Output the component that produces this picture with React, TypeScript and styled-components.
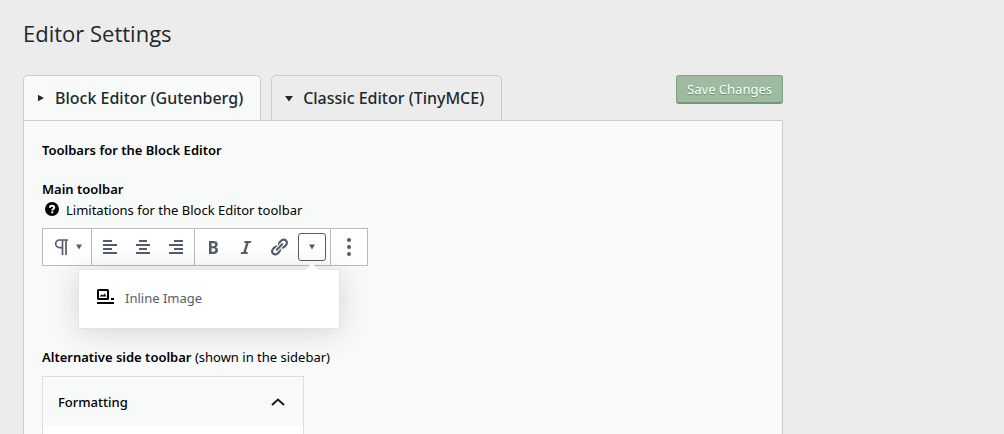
import React from "react";
import styled, { createGlobalStyle, css } from "styled-components";

const GlobalStyle = createGlobalStyle`
  *, *::before, *::after { box-sizing: border-box; }
  body {
    margin: 0;
    background: #ececec;
    color: #000;
    font-family: "Noto Sans", "Open Sans", sans-serif;
    font-size: 13px;
    line-height: 20px;
  }
  button { font: inherit; color: inherit; cursor: pointer; margin: 0; }
`;

const Page = styled.main`
  display: flex;
  flex-direction: column;
  min-height: 100vh;
  max-width: 784px;
  padding: 18px 1px 0 23px;
`;

const Title = styled.h1`
  margin: 0 0 27px;
  font-family: "Open Sans", "Noto Sans", sans-serif;
  font-size: 22px;
  font-weight: 400;
  line-height: 30px;
  color: #23282d;
`;

const Header = styled.div`
  display: flex;
  justify-content: space-between;
  align-items: flex-start;
`;

const Tabs = styled.div`
  display: flex;
  gap: 10px;
  margin-bottom: -1px;
`;

const Tab = styled.button<{ $active?: boolean }>`
  display: flex;
  align-items: center;
  gap: 10px;
  height: 46px;
  padding: 0 17px 0 13px;
  border: 1px solid #ccc;
  border-bottom-color: ${(p) => (p.$active ? "#f8faf9" : "#ccc")};
  border-radius: 5px 5px 0 0;
  background: ${(p) => (p.$active ? "#f8faf9" : "#ececec")};
  color: #23282d;
  font-size: 16px;
  font-weight: 500;
`;

const SaveButton = styled.button`
  height: 29px;
  padding: 0 10px;
  border: 1px solid #7ba581;
  border-bottom: 2px solid #6f9b75;
  border-radius: 3px;
  background: #9ebaa1;
  color: #fff;
  text-shadow: 0 1px 1px #5f9067;
`;

const Panel = styled.section`
  display: flex;
  flex-direction: column;
  flex: 1;
  padding: 19px 18px 0;
  border: 1px solid #ccc;
  border-bottom: 0;
  background: #f8faf9;
`;

const Heading = styled.h2`
  margin: 0;
  font-size: 13px;
  font-weight: 600;
`;

const ToolbarSection = styled.div`
  margin: 19px 0 81px;
`;

const HelpLink = styled.a`
  display: flex;
  align-items: center;
  gap: 6px;
  width: fit-content;
  height: 22px;
  padding-left: 2px;
  color: #000;
  text-decoration: none;
`;

const Toolbar = styled.div`
  position: relative;
  display: flex;
  width: fit-content;
  height: 38px;
  margin-top: 7px;
  border: 1px solid #b5bcc2;
  background: #fff;
  color: #555d66;
`;

const Group = styled.div`
  display: flex;
  align-items: center;
  padding: 0 2px 0 1px;
  & + & { border-left: 1px solid #b5bcc2; }
`;

const ToolButton = styled.button<{ $width?: number; $boxed?: boolean }>`
  display: flex;
  align-items: center;
  justify-content: center;
  gap: 4px;
  width: ${(p) => p.$width ?? 33}px;
  height: 28px;
  padding: 0;
  border: 0;
  border-radius: 3px;
  background: transparent;
  ${(p) =>
    p.$boxed &&
    css`
      width: 28px;
      margin: 0 2px 0 3px;
      border: 1px solid #555d66;
      background: #fff;
    `}
`;

const Popover = styled.div`
  position: absolute;
  top: 40px;
  left: 35px;
  width: 262px;
  padding: 8px 8px 10px;
  border: 1px solid #e2e4e7;
  background: #fff;
  box-shadow: 0 3px 30px rgba(25, 30, 35, 0.16);
`;

const PopoverArrow = styled.svg`
  position: absolute;
  top: -7px;
  right: 19px;
`;

const MenuItem = styled.button`
  display: flex;
  align-items: center;
  gap: 9px;
  width: 100%;
  height: 40px;
  padding: 0 9px;
  border: 0;
  background: transparent;
  color: #555d66;
`;

const SideLabel = styled.p`
  margin: 0;
`;

const Strong = styled.strong`
  font-weight: 600;
`;

const Card = styled.div`
  display: flex;
  flex-direction: column;
  flex: 1;
  width: 262px;
  margin-top: 9px;
  border: 1px solid #ddd;
  border-bottom: 0;
  background: #fff;
`;

const CardToggle = styled.button`
  display: flex;
  align-items: center;
  justify-content: space-between;
  height: 49px;
  padding: 0 18px 0 15px;
  border: 0;
  background: #f8f9f9;
  font-weight: 500;
`;

function Icon({ d }: { d: string }) {
  return (
    <svg width="20" height="20" viewBox="0 0 20 20" fill="currentColor" aria-hidden="true">
      <path d={d} />
    </svg>
  );
}

function Caret({ right }: { right?: boolean }) {
  return (
    <svg width="8" height="8" viewBox="0 0 8 8" fill="currentColor" aria-hidden="true">
      <path d={right ? "M1 .8L7 4 1 7.2z" : "M0 2h8L4 7.500z"} />
    </svg>
  );
}

const SmallCaret = () => (
  <svg width="6" height="6" viewBox="0 0 6 6" fill="currentColor" aria-hidden="true">
    <path d="M0 .5h6L3 5.5z" />
  </svg>
);

const icons = {
  alignLeft: "M12 5V3H3v2h9zm5 4V7H3v2h14zm-5 4v-2H3v2h9zm5 4v-2H3v2h14z",
  alignCenter: "M14 5V3H6v2h8zm3 4V7H3v2h14zm-3 4v-2H6v2h8zm3 4v-2H3v2h14z",
  alignRight: "M17 5V3H8v2h9zm0 4V7H3v2h14zm0 4v-2H8v2h9zm0 4v-2H3v2h14z",
  bold: "M6 4v13h4.54c1.37 0 2.46-.33 3.26-1 .8-.66 1.2-1.58 1.2-2.77 0-.84-.17-1.51-.51-2.01s-.9-.85-1.67-1.03v-.09c.57-.1 1.02-.4 1.36-.9s.51-1.13.51-1.91c0-1.14-.39-1.98-1.17-2.5C12.75 4.26 11.5 4 9.78 4H6zm2.57 5.15V6.26h1.36c.73 0 1.27.11 1.61.32.34.22.51.58.51 1.07 0 .54-.16.92-.47 1.15s-.82.35-1.51.35h-1.5zm0 2.19h1.6c1.44 0 2.16.53 2.16 1.61 0 .6-.17 1.05-.51 1.34s-.86.43-1.57.43H8.57v-3.38z",
  italic: "M14.78 6h-2.13l-2.8 9h2.12l-.62 2H4.6l.62-2h2.14l2.8-9H8.03l.62-2h6.75z",
  link: "M17.74 2.76c1.68 1.69 1.68 4.41 0 6.1l-1.53 1.52c-1.12 1.12-2.7 1.47-4.14 1.09l2.62-2.61.76-.77.76-.76c.84-.84.84-2.2 0-3.04-.84-.85-2.2-.85-3.04 0l-.77.76-3.38 3.38c-.37-1.44-.02-3.02 1.1-4.14l1.52-1.53c1.69-1.68 4.42-1.68 6.1 0zM8.59 13.43l5.34-5.34c.42-.42.42-1.1 0-1.52-.44-.43-1.13-.39-1.53 0l-5.33 5.34c-.42.42-.42 1.1 0 1.52.44.43 1.13.39 1.52 0zm-.76 2.29l4.14-4.15c.38 1.44.03 3.02-1.09 4.14l-1.52 1.53c-1.69 1.68-4.41 1.68-6.1 0-1.68-1.68-1.68-4.42 0-6.1l1.53-1.52c1.12-1.12 2.7-1.47 4.14-1.1l-4.14 4.15c-.85.84-.85 2.2 0 3.05.84.84 2.2.84 3.04 0z",
};

export default function App() {
  return (
    <>
      <GlobalStyle />
      <Page>
        <Title>Editor Settings</Title>
        <Header>
          <Tabs role="tablist">
            <Tab role="tab" aria-selected="true" $active>
              <Caret right />
              Block Editor (Gutenberg)
            </Tab>
            <Tab role="tab" aria-selected="false">
              <Caret />
              Classic Editor (TinyMCE)
            </Tab>
          </Tabs>
          <SaveButton type="submit">Save Changes</SaveButton>
        </Header>
        <Panel role="tabpanel">
          <Heading>Toolbars for the Block Editor</Heading>
          <ToolbarSection>
            <Heading>Main toolbar</Heading>
            <HelpLink href="#limitations">
              <svg width="16" height="16" viewBox="0 0 16 16" aria-hidden="true">
                <circle cx="8" cy="7" r="7" fill="#000" />
                <path d="M5.9 5.7C5.9 4.3 6.8 3.7 8 3.7s2.2.7 2.2 1.8c0 1.400-1.900 1.500-1.900 2.900" fill="none" stroke="#fff" strokeWidth="2" />
                <rect x="7.300" y="9.300" width="2" height="2" fill="#fff" />
              </svg>
              Limitations for the Block Editor toolbar
            </HelpLink>
            <Toolbar role="toolbar" aria-label="Main toolbar">
              <Group>
                <ToolButton $width={45} aria-label="Paragraph">
                  <svg width="20" height="20" viewBox="0 0 20 20" fill="none" stroke="currentColor" strokeWidth="1.700" aria-hidden="true">
                    <path d="M16 3H7.500a3.800 3.800 0 0 0 0 7.600H10.500M10.500 3V18M14 3V18" />
                  </svg>
                  <SmallCaret />
                </ToolButton>
              </Group>
              <Group>
                <ToolButton aria-label="Align left"><Icon d={icons.alignLeft} /></ToolButton>
                <ToolButton aria-label="Align center"><Icon d={icons.alignCenter} /></ToolButton>
                <ToolButton aria-label="Align right"><Icon d={icons.alignRight} /></ToolButton>
              </Group>
              <Group>
                <ToolButton aria-label="Bold"><Icon d={icons.bold} /></ToolButton>
                <ToolButton aria-label="Italic"><Icon d={icons.italic} /></ToolButton>
                <ToolButton aria-label="Link"><Icon d={icons.link} /></ToolButton>
                <ToolButton $boxed aria-label="More rich text controls" aria-expanded="true">
                  <SmallCaret />
                </ToolButton>
              </Group>
              <Group>
                <ToolButton aria-label="More options">
                  <svg width="20" height="20" viewBox="0 0 20 20" fill="currentColor" aria-hidden="true">
                    <circle cx="10" cy="3" r="2" />
                    <circle cx="10" cy="10" r="2" />
                    <circle cx="10" cy="17" r="2" />
                  </svg>
                </ToolButton>
              </Group>
              <Popover role="menu">
                <PopoverArrow width="16" height="8" viewBox="0 0 16 8" aria-hidden="true">
                  <path d="M0 8L8 0l8 8z" fill="#fff" />
                  <path d="M1 7l7-7 7 7" fill="none" stroke="#e2e4e7" />
                </PopoverArrow>
                <MenuItem role="menuitem">
                  <svg width="20" height="20" viewBox="0 0 20 20" aria-hidden="true">
                    <path d="M2.500 1h9a1.500 1.500 0 0 1 1.500 1.500v8a1.500 1.500 0 0 1-1.500 1.500h-9A1.500 1.500 0 0 1 1 10.500v-8A1.500 1.500 0 0 1 2.500 1zM3 3v7h8V3zM3.500 8.500l2-2 1.500 1 1.500-2 2 3zM15 10h3v2h-3zM1 14h17v2H1z" fill="#000" fillRule="evenodd" />
                  </svg>
                  Inline Image
                </MenuItem>
              </Popover>
            </Toolbar>
          </ToolbarSection>
          <SideLabel>
            <Strong>Alternative side toolbar</Strong> (shown in the sidebar)
          </SideLabel>
          <Card>
            <CardToggle aria-expanded="true">
              Formatting
              <svg width="14" height="10" viewBox="0 0 14 10" fill="none" stroke="#191e23" strokeWidth="2" aria-hidden="true">
                <path d="M1 8l6-5.500L13 8" />
              </svg>
            </CardToggle>
          </Card>
        </Panel>
      </Page>
    </>
  );
}
